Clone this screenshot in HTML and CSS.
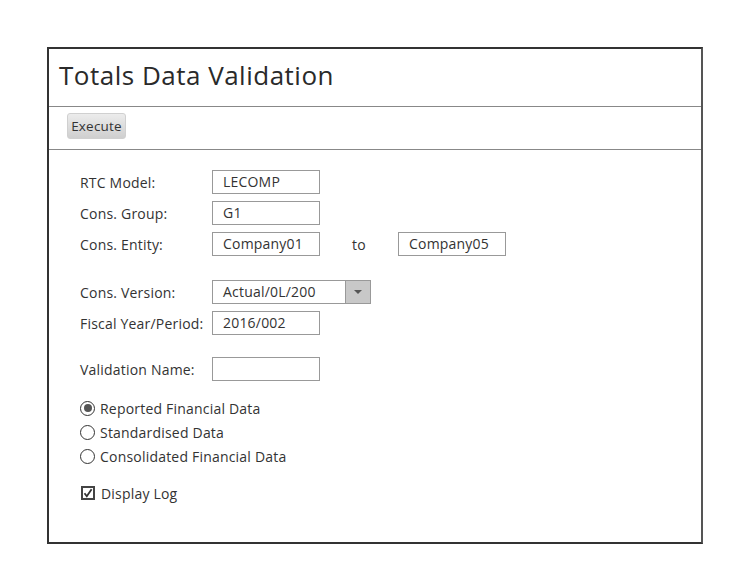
FILE: index.html
```html
<!DOCTYPE html>
<html>
<head>
<meta charset="utf-8">
<link rel="stylesheet" href="styles.css">
</head>
<body>
<div class="frame">
  <div class="title">Totals Data Validation</div>
  <div class="toolbar"><button class="btn">Execute</button></div>
  <div class="form">
    <div class="grid">
      <div class="lbl">RTC Model:</div>
      <div class="fields"><div class="input">LECOMP</div></div>
      <div class="lbl">Cons. Group:</div>
      <div class="fields"><div class="input">G1</div></div>
      <div class="lbl">Cons. Entity:</div>
      <div class="fields"><div class="input">Company01</div><span class="to">to</span><div class="input">Company05</div></div>
      <div class="lbl gap1">Cons. Version:</div>
      <div class="fields gap1">
        <div class="select"><span class="sel-text">Actual/0L/200</span><span class="sel-btn"><svg width="10" height="6" viewBox="0 0 10 6"><path d="M1 1h8L5 5z" fill="#555"/></svg></span></div>
      </div>
      <div class="lbl">Fiscal Year/Period:</div>
      <div class="fields"><div class="input">2016/002</div></div>
      <div class="lbl gap2">Validation Name:</div>
      <div class="fields gap2"><div class="input"></div></div>
    </div>
    <div class="radios">
      <div class="opt"><span class="radio on"></span>Reported Financial Data</div>
      <div class="opt"><span class="radio"></span>Standardised Data</div>
      <div class="opt"><span class="radio"></span>Consolidated Financial Data</div>
    </div>
    <div class="opt check-row"><span class="check"><svg width="10" height="10" viewBox="0 0 10 10"><path d="M1.5 5.2l2.3 3L8.6 1.2" fill="none" stroke="#333" stroke-width="1.8"/></svg></span>Display Log</div>
  </div>
</div>
</body>
</html>
```
FILE: styles.css
```css
* { box-sizing: border-box; }
body {
  margin: 0;
  background: #fff;
  font-family: "Open Sans", "Noto Sans", sans-serif;
  color: #333;
}
.frame {
  margin: 47px 0 0 47px;
  width: 656px;
  height: 497px;
  border: 2px solid #333;
  border-right-color: #555;
}
.title {
  height: 58px;
  padding: 8px 0 0 10px;
  font-size: 26px;
  line-height: 36px;
  border-bottom: 1px solid #888;
  color: #2a2a2a;
  letter-spacing: 0.5px;
}
.toolbar {
  height: 43px;
  padding: 6px 0 0 18px;
  border-bottom: 1px solid #888;
}
.btn {
  height: 26px;
  width: 59px;
  padding: 0;
  font-family: inherit;
  font-size: 13.5px;
  letter-spacing: 0.2px;
  color: #333;
  border: 1px solid #d0d0d0;
  border-radius: 3px;
  background: linear-gradient(#ececec, #cfcfcf);
}
.form {
  padding: 20px 0 0 31px;
  letter-spacing: 0.2px;
}
.grid {
  display: grid;
  grid-template-columns: 132px auto;
  row-gap: 7px;
  align-items: center;
  font-size: 14px;
}
.gap1 { margin-top: 17px; }
.gap2 { margin-top: 15px; }
.fields {
  display: flex;
  align-items: center;
  height: 24px;
}
.input {
  width: 108px;
  height: 24px;
  border: 1px solid #999;
  padding: 0 10px;
  line-height: 22px;
  font-size: 14px;
  color: #333;
}
.to {
  width: 78px;
  text-align: center;
}
.select {
  display: flex;
  width: 159px;
  height: 24px;
  border: 1px solid #999;
}
.sel-text {
  flex: 1;
  padding-left: 10px;
  line-height: 22px;
}
.sel-btn {
  width: 25px;
  background: #c8c8c8;
  border-left: 1px solid #999;
  display: flex;
  align-items: center;
  justify-content: center;
}
.radios {
  margin-top: 18px;
  display: flex;
  flex-direction: column;
  row-gap: 6px;
}
.opt {
  display: flex;
  align-items: center;
  height: 18px;
  font-size: 14px;
}
.radio {
  width: 15px;
  height: 15px;
  border: 1.6px solid #333;
  border-radius: 50%;
  margin-right: 5px;
  display: flex;
  align-items: center;
  justify-content: center;
}
.radio.on::after {
  content: "";
  width: 8px;
  height: 8px;
  border-radius: 50%;
  background: #555;
}
.check-row { margin-top: 19px; }
.check {
  width: 14px;
  height: 14px;
  border: 2px solid #444;
  margin: 0 6px 0 1px;
  display: flex;
  align-items: center;
  justify-content: center;
}
```
